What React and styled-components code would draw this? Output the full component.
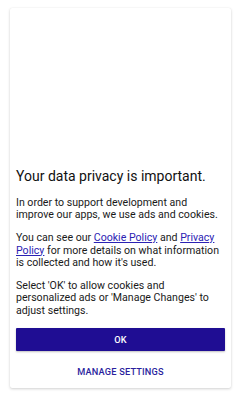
import React from 'react';
import styled, { createGlobalStyle } from 'styled-components';

const GlobalStyle = createGlobalStyle`
  html, body {
    margin: 0;
    padding: 0;
    background: #ffffff;
    font-family: Roboto, "Liberation Sans", sans-serif;
  }
`;

const Page = styled.div`
  width: 240px;
  height: 400px;
  box-sizing: border-box;
  padding: 8px 9px 12px 10px;
  display: flex;
`;

const Card = styled.div`
  flex: 1;
  display: flex;
  flex-direction: column;
  justify-content: flex-end;
  background: #ffffff;
  border-radius: 2px;
  box-shadow: 0 1px 3px rgba(0, 0, 0, 0.18), 0 0 1px rgba(0, 0, 0, 0.08);
  padding: 0 6px 5px 6px;
`;

const Title = styled.h1`
  margin: 0 0 11.4px;
  font-size: 14px;
  font-weight: 400;
  line-height: 18px;
  color: #111;
`;

const Text = styled.p`
  margin: 0 0 10px;
  font-size: 10.6px;
  line-height: 12.6px;
  color: #1a1a1a;
`;

const Link = styled.a`
  color: #2b22b3;
  text-decoration: underline;
`;

const PrimaryButton = styled.button`
  margin-top: 0.5px;
  height: 23px;
  border: none;
  border-radius: 1px;
  background: #1f0d93;
  color: #ffffff;
  font-family: inherit;
  font-size: 9.2px;
  font-weight: 500;
  letter-spacing: 0.2px;
  box-shadow: 0 1px 2px rgba(0, 0, 0, 0.25);
`;

const TextButton = styled.button`
  margin-top: 8px;
  height: 24px;
  border: none;
  background: none;
  color: #2b1f9e;
  font-family: inherit;
  font-size: 9.2px;
  font-weight: 500;
  letter-spacing: 0.2px;
`;

export default function App() {
  return (
    <>
      <GlobalStyle />
      <Page>
        <Card>
          <Title>Your data privacy is important.</Title>
          <Text>
            In order to support development and improve our apps, we use ads and cookies.
          </Text>
          <Text>
            You can see our <Link>Cookie Policy</Link> and <Link>Privacy Policy</Link> for
            more details on what information is collected and how it's used.
          </Text>
          <Text>
            Select 'OK' to allow cookies and personalized ads or 'Manage Changes' to
            adjust settings.
          </Text>
          <PrimaryButton>OK</PrimaryButton>
          <TextButton>MANAGE SETTINGS</TextButton>
        </Card>
      </Page>
    </>
  );
}
